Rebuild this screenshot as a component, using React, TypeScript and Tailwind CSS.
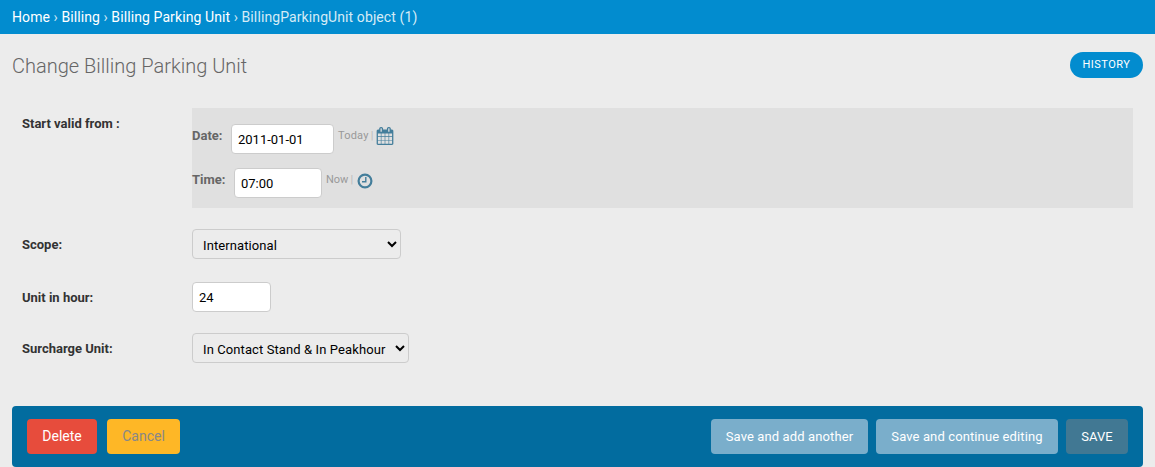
function CalendarIcon() {
  return (
    <svg viewBox="0 0 1792 1792" className="w-[18px] h-[18px] fill-[#447e9b]">
      <path d="M192 1664h288v-288h-288v288zm352 0h320v-288h-320v288zm-352-352h288v-320h-288v320zm352 0h320v-320h-320v320zm-352-384h288v-288h-288v288zm736 736h320v-288h-320v288zm-384-736h320v-288h-320v288zm768 736h288v-288h-288v288zm-384-352h320v-320h-320v320zm-352-864v-288q0-13-9.5-22.5t-22.5-9.5h-64q-13 0-22.5 9.5t-9.5 22.5v288q0 13 9.5 22.5t22.5 9.5h64q13 0 22.5-9.5t9.5-22.5zm736 864h288v-320h-288v320zm-384-384h320v-288h-320v288zm384 0h288v-288h-288v288zm32-480v-288q0-13-9.5-22.5t-22.5-9.5h-64q-13 0-22.5 9.5t-9.5 22.5v288q0 13 9.5 22.5t22.5 9.5h64q13 0 22.5-9.5t9.5-22.5zm384-64v1280q0 52-38 90t-90 38h-1408q-52 0-90-38t-38-90v-1280q0-52 38-90t90-38h128v-96q0-66 47-113t113-47h64q66 0 113 47t47 113v96h384v-96q0-66 47-113t113-47h64q66 0 113 47t47 113v96h128q52 0 90 38t38 90z" />
    </svg>
  );
}

function ClockIcon() {
  return (
    <svg viewBox="0 0 16 16" className="w-[16px] h-[16px]">
      <circle cx="8" cy="8" r="6.4" fill="none" stroke="#447e9b" strokeWidth="2.2" />
      <path d="M8.8 4v4.8H5" fill="none" stroke="#447e9b" strokeWidth="1.4" />
    </svg>
  );
}

const inputClass =
  'h-[30px] bg-white border border-[#ccc] rounded-[4px] text-[13px] text-black outline-none';

function Row({ label, className, children }: { label: string; className?: string; children: React.ReactNode }) {
  return (
    <div className={`flex items-center ${className ?? ''}`}>
      <label className="w-[170px] shrink-0 pt-[2px] text-[13px] font-bold text-[#333]">{label}</label>
      {children}
    </div>
  );
}

export default function App() {
  return (
    <div className="relative h-[467px] overflow-hidden bg-[#ececec] font-['Roboto',sans-serif]">
      {/* Breadcrumbs */}
      <div className="h-[34px] bg-[#028ccf] px-3 flex items-center text-[14px] tracking-[0.1px] text-white">
        <span>Home</span>
        <span className="mx-[3.5px] text-[#cfe8f5]">›</span>
        <span>Billing</span>
        <span className="mx-[3.5px] text-[#cfe8f5]">›</span>
        <span>Billing Parking Unit</span>
        <span className="mx-[3.5px] text-[#cfe8f5]">›</span>
        <span className="text-[#d5ebf6]">BillingParkingUnit object (1)</span>
      </div>

      {/* Title */}
      <div className="flex items-center justify-between pl-3 pr-3 mt-[18px] h-[26px]">
        <h1 className="pt-[2px] text-[20px] font-light text-[#666]">Change Billing Parking Unit</h1>
        <a className="h-[26px] w-[73px] rounded-[13px] bg-[#028ccf] text-white text-[11px] tracking-[0.5px] flex items-center justify-center">
          HISTORY
        </a>
      </div>

      {/* Form */}
      <div className="pl-[22px] pr-[22px] mt-[30px]">
        <div className="flex">
          <label className="w-[170px] shrink-0 pt-[6px] text-[13px] font-bold text-[#333]">Start valid from :</label>
          <div className="h-[100px] w-[941px] bg-[#e0e0e0] pt-4">
            <div className="flex items-start h-[44px]">
              <span className="text-[13px] font-bold text-[#666] w-[39px] mt-[2px]">Date:</span>
              <input readOnly value="2011-01-01" className={`${inputClass} w-[103px] px-[6px]`} />
              <span className="ml-[4px] mt-[4px] text-[11px] tracking-[0.2px] text-[#999]">Today</span>
              <span className="ml-[2px] mt-[4px] text-[11px] text-[#bbb]">|</span>
              <span className="ml-[3px] mt-[3px]"><CalendarIcon /></span>
            </div>
            <div className="flex items-start">
              <span className="text-[13px] font-bold text-[#666] w-[43px] mt-[2px]">Time:</span>
              <input readOnly value="07:00" className={`${inputClass} -ml-[1px] w-[88px] px-[6px]`} />
              <span className="ml-[4px] mt-[4px] text-[11px] text-[#999]">Now</span>
              <span className="ml-[2px] mt-[4px] text-[11px] text-[#bbb]">|</span>
              <span className="ml-[4px] mt-[5px]"><ClockIcon /></span>
            </div>
          </div>
        </div>

        <Row label="Scope:" className="mt-[21px]">
          <select className="h-[30px] w-[209px] pl-[6px] pt-[2px] bg-transparent border border-[#ccc] rounded-[4px] text-[13px] tracking-[0.1px] text-black">
            <option>International</option>
          </select>
        </Row>

        <Row label="Unit in hour:" className="mt-[23px]">
          <input readOnly value="24" className={`${inputClass} w-[79px] px-[6px]`} />
        </Row>

        <Row label="Surcharge Unit:" className="mt-[21px]">
          <select className="h-[30px] w-[217px] pl-[6px] pt-[2px] bg-transparent border border-[#ccc] rounded-[4px] text-[13px] tracking-[0.1px] text-black">
            <option>In Contact Stand &amp; In Peakhour</option>
          </select>
        </Row>
      </div>

      {/* Submit row */}
      <div className="mx-3 mt-[43px] h-[61px] bg-[#026c9f] rounded-[4px] px-[15px] flex items-start pt-[13px] text-[14px]">
        <button className="h-[35px] w-[70px] rounded-[4px] bg-[#e74c3c] text-white">Delete</button>
        <button className="ml-[10px] h-[35px] w-[73px] rounded-[4px] bg-[#feb726] text-[#888]">Cancel</button>
        <div className="ml-auto flex gap-2">
          <button className="h-[35px] w-[157px] rounded-[4px] bg-[#7aaecb] text-white text-[13px] tracking-[0.12px]">Save and add another</button>
          <button className="h-[35px] w-[182px] rounded-[4px] bg-[#7aaecb] text-white text-[13px] tracking-[0.12px]">Save and continue editing</button>
          <button className="h-[35px] w-[62px] rounded-[4px] bg-[#417893] text-white text-[13px]">SAVE</button>
        </div>
      </div>
    </div>
  );
}
